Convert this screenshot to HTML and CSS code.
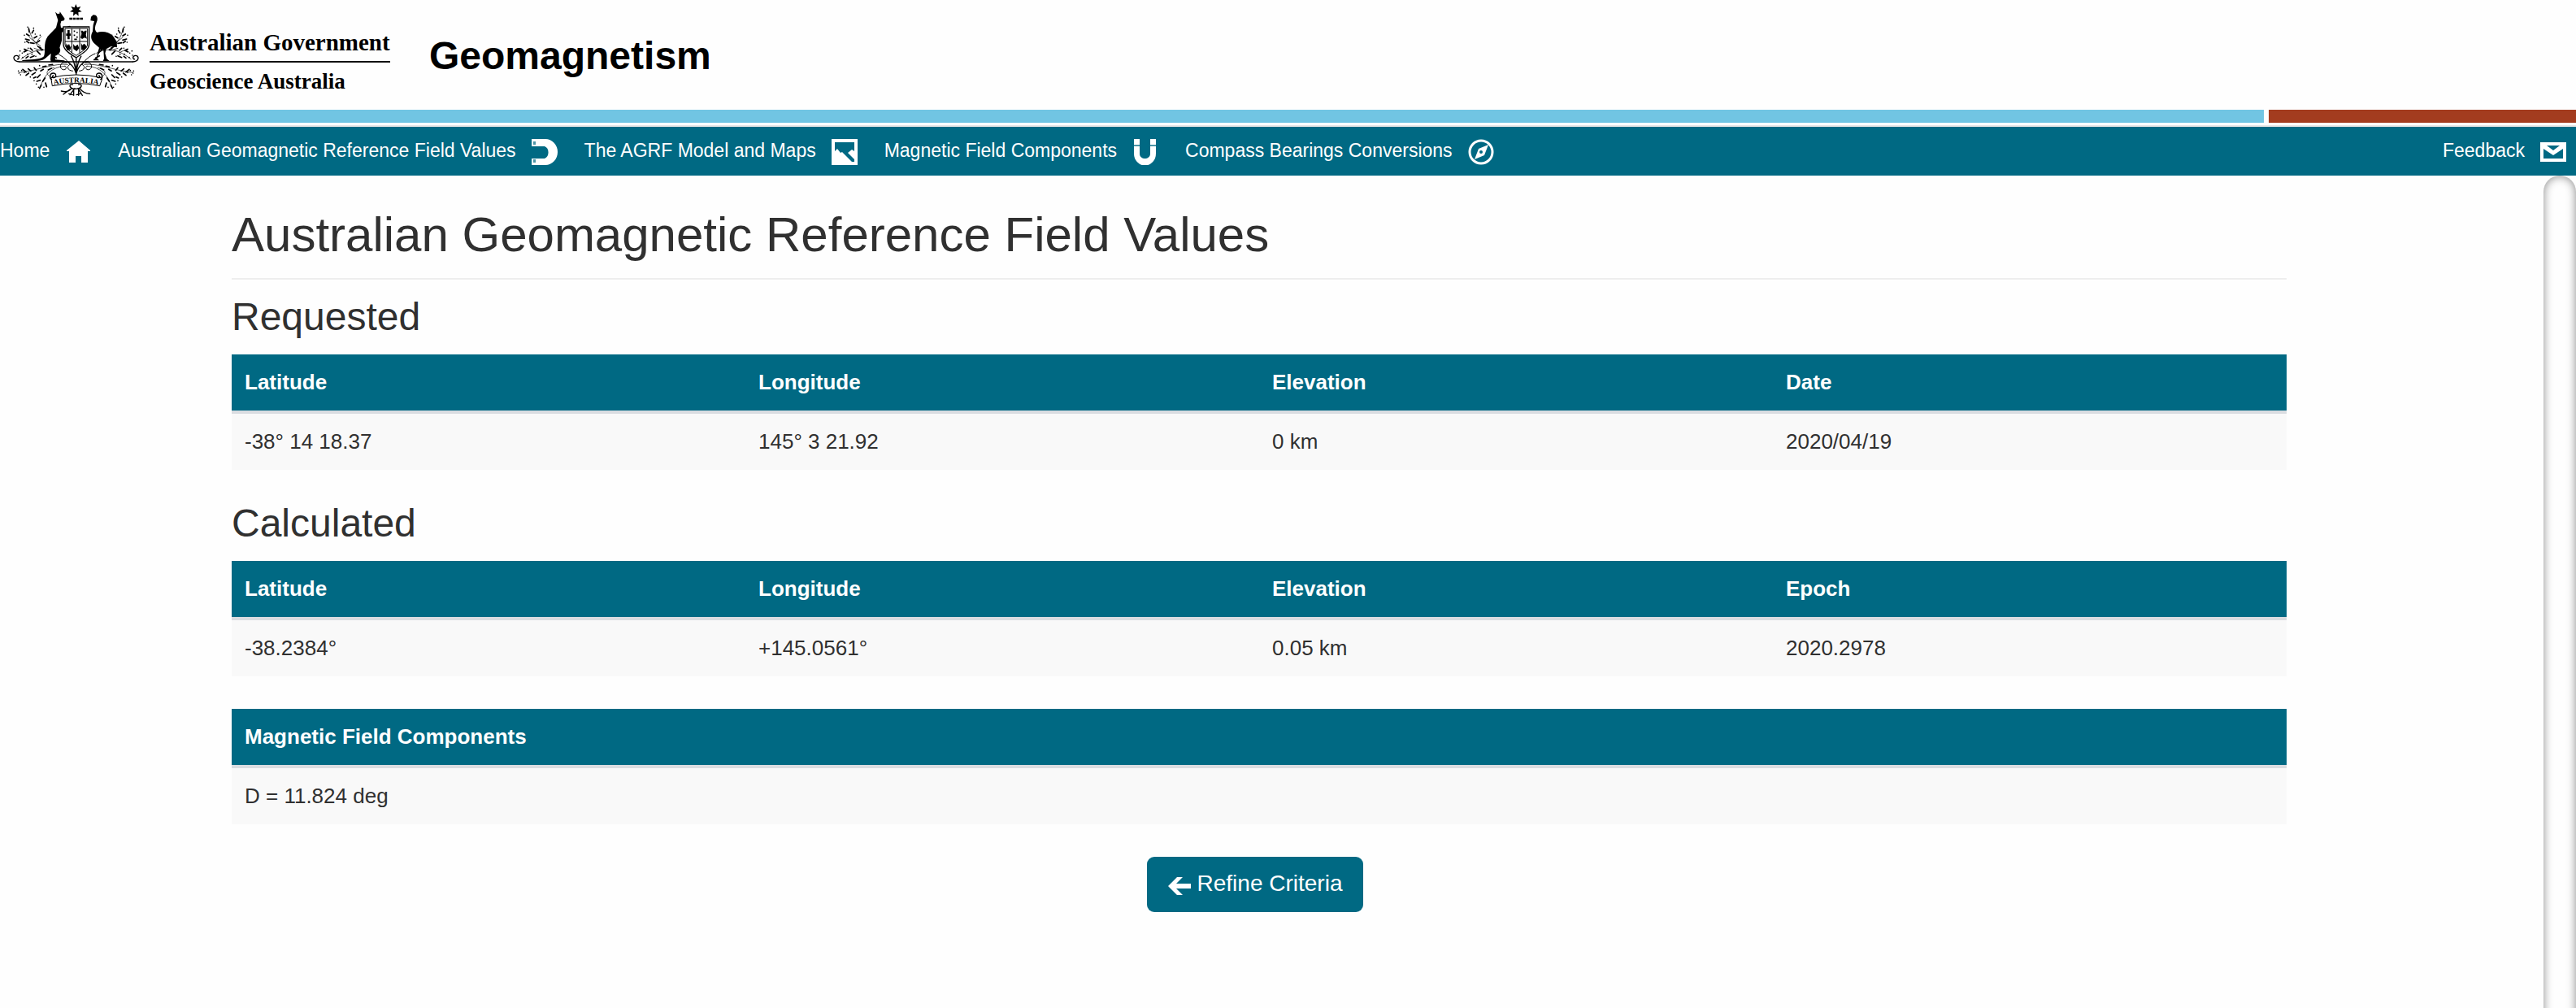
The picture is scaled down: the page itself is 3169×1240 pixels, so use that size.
FILE: index.html
```html
<!DOCTYPE html>
<html lang="en">
<head>
<meta charset="utf-8">
<title>Geomagnetism</title>
<link rel="stylesheet" href="styles.css">
</head>
<body>
<header class="site-header">
  <a class="brand" href="#">
    <svg class="crest" viewBox="0 0 570 375" aria-hidden="true">
      <defs>
        <g id="spray" fill="none" stroke="#000" stroke-width="2" stroke-linecap="round">
          <path d="M155 188C135 165 112 140 106 102M150 170l-42-32M138 150l14-16M205 196C160 172 120 185 78 218M150 186l-24-8M120 194l-30-14"/>
          <path stroke-width="5" d="M106 106l2 12M118 122l6-10M98 126l10 6M94 144l14 4M126 140l10-6M112 158l14 2M134 158l12-8M98 152l8 6M140 172l10 4M88 192l12-6M112 212l14-6M96 214l8-6M136 188l12 12M120 186l-8-8M158 184l-12-8M186 184l10 10M194 206l14 8M90 182l8 4"/>
          <path stroke-width="5" d="M102 100v0M90 130v0M124 104v0M130 126v0M148 130v0M92 156v0M82 196v0M74 188v0M72 204v0M104 178v0M84 212v0M132 208v0M118 200v0M102 200v0"/>
          <path d="M250 238C200 232 150 258 70 268M240 244C190 246 160 280 150 320M200 250c-30 4-36 26-10 34"/>
          <path stroke-width="5" d="M84 256l12 10M104 254l10 8M126 250l8 10M96 278l10-8M118 276l12-8M138 286l10-10M150 262l10-6M158 246l12-2M136 300l12-4M166 288l-8 12M152 314l-6 12M168 306l4 14M180 240l14-2M178 258l12-6M124 288l8-4"/>
          <path stroke-width="5" d="M68 262v0M76 276v0M70 270v0M90 268v0M126 298v0M134 310v0M162 322v0M142 322v0M146 242v0M112 284v0M80 260v0"/>
          <path stroke-width="3" d="M244 232c-16-8-30 14-14 24 12 6 20-8 10-12M262 240c-12-14-30-34-52-42M268 262c-20-2-24-18-10-24"/>
        </g>
      </defs>
      <use href="#spray"/>
      <use href="#spray" transform="translate(561 0) scale(-1 1)"/>
      <path d="M280 15l5 13 13-4-7 11 11 8-13 2 1 14-10-9-10 9 1-14-13-2 11-8-7-11 13 4z"/>
      <path d="M256 69h50" stroke="#000" stroke-width="7" stroke-dasharray="11 2"/>
      <path d="M70 228h422" stroke="#000" stroke-width="5"/>
      <path d="M72 228C46 226 46 204 62 205c12 2 9 15 1 13M490 228c26-2 24-24 9-23-12 2-9 15-1 13" fill="none" stroke="#000" stroke-width="4"/>
      <path d="M204 44l8 7 8-1 1-7 7 10 11 16-3 7-10 2-3 11 2 14 14-2 18-6 6 5-24 12-11 8v30l-8 26c8 14-4 26-17 30l1 14 32 3 10 6h-58l-2-10 2-22-18 16c-12 12-30 14-88 12v-3c46-3 72-4 80-14 8-20-4-46 14-74l31-32 7-28z"/>
      <path d="M336 62l8-7c13-1 17 10 15 20l-7 20c-3 10-1 20 6 25 20-6 44-2 60 14l13 20 1 21-22-4-18 10-4 16 6 20 10 8h-24l4-8-2-32-12-2-6 18-6 14 8 8h-22l2-5 10-5 4-17 6-20-20-18c-12-14-12-28-4-42l2-24 4-14-14-2z"/>
      <path d="M234 99h95v64c0 22-26 34-48 50-24-16-47-28-47-50z" fill="#fff" stroke="#000" stroke-width="4"/>
      <path d="M240 105h83v57c0 18-22 29-42 43-20-14-41-25-41-43zM240 153h83M265 105v91M294 105v91" fill="none" stroke="#000" stroke-width="3"/>
      <path d="M253 111v34M244 128h17" stroke="#000" stroke-width="8"/>
      <path d="M272 115h5M282 120h5M272 130h5M282 137h5M274 145h10" stroke="#000" stroke-width="5"/>
      <path d="M299 113h6l4 5 4-5h7l-3 15 4 15-9-4-9 5-6-5 4-14z"/>
      <path d="M245 160l5 8 5-6 4 11 4-3-3 14-12 2-5-13zM270 162l7 9 10-7 5 14-9 11-12-8zM299 158l5 9 6-6 6 5 4 8-9 11-11-1z"/>
      <path d="M281 214v96M262 206c12 20 16 38 19 66 3-28 7-46 19-66M236 226c24 2 37 20 45 46 8-26 20-44 45-46" fill="none" stroke="#000" stroke-width="4"/>
      <path d="M188 287q93-22 186 0l2 7-8 23q-87-19-175 0z" fill="#fff" stroke="#000" stroke-width="3"/>
      <path d="M192 294c-12-6-8-24 4-24 14 0 12 18 2 17-7-1-4-10 1-8M370 294c12-6 8-24-4-24-14 0-12 18-2 17 7-1 4-10-1-8" fill="none" stroke="#000" stroke-width="4"/>
      <path id="ribbon" d="M199 313q82-17 166 0" fill="none"/>
      <text class="crest-motto"><textPath href="#ribbon">AUSTRALIA</textPath></text>
      <path d="M268 312c-18-2-10 18 10 16 24 0 30-18 12-16M276 326l-18 24M288 326l16 26M272 330v22M290 330v22M264 326c-10 14-24 14-38 10M294 326c10 14 24 20 38 20M258 330l-24 18M254 346l14 4M296 346l-14 4" fill="none" stroke="#000" stroke-width="4" stroke-linecap="round"/>
    </svg>
    <span class="brand-text">
      <span class="brand-government">Australian Government</span>
      <span class="brand-agency">Geoscience Australia</span>
    </span>
  </a>
  <p class="site-title">Geomagnetism</p>
</header>
<div class="stripes"><span class="stripe-blue"></span><span class="stripe-red"></span></div>
<nav class="site-nav">
  <a href="#">Home
    <svg class="icon" viewBox="0 0 32 32"><path d="M17 2L31 14v1h-3v14H20v-8h-7v8H5V15H2v-1z"/></svg></a>
  <a href="#">Australian Geomagnetic Reference Field Values
    <svg class="icon" viewBox="0 0 32 32"><path d="M0 0h17a15 16 0 0 1 0 32H0v-8h16a7 8 0 0 0 0-15H0z"/><path class="icon-tint" d="M2 3h3v4H2zM2 25h3v4H2z"/></svg></a>
  <a href="#">The AGRF Model and Maps
    <svg class="icon" viewBox="0 0 32 32"><path d="M0 0h32v32H0z"/><path class="icon-cut" d="M4 4h24v11l-3-2-5 4 8 8v3h-3L13 16l-2 1-4-5-3 3z"/></svg></a>
  <a href="#">Magnetic Field Components
    <svg class="icon" viewBox="0 0 32 32"><path d="M2 0h7v7H2zM22 0h7v7h-7z"/><path class="icon-tint" d="M2 7h7v2H2zM22 7h7v2h-7z"/><path d="M2 9h7v9c0 8 13 8 13 0V9h7v9a13 14 0 0 1-27 0z"/></svg></a>
  <a href="#">Compass Bearings Conversions
    <svg class="icon" viewBox="0 0 32 32"><circle class="icon-ring" cx="16" cy="16" r="14"/><path fill-rule="evenodd" d="M25 7l-5 13L8 25l5-13zM16 14a2 2 0 1 0 0 4 2 2 0 0 0 0-4z"/></svg></a>
  <a class="nav-feedback" href="#">Feedback
    <svg class="icon" viewBox="0 0 32 32"><path d="M0 4h32v24H0z"/><path class="icon-cut" d="M4 12l12 8 12-8v12H4zM8 8h16l-8 6z"/></svg></a>
</nav>
<div class="page-body">
  <main class="content">
    <h1>Australian Geomagnetic Reference Field Values</h1>
    <h2>Requested</h2>
    <table>
      <thead><tr><th scope="col">Latitude</th><th scope="col">Longitude</th><th scope="col">Elevation</th><th scope="col">Date</th></tr></thead>
      <tbody><tr><td>-38° 14 18.37</td><td>145° 3 21.92</td><td>0 km</td><td>2020/04/19</td></tr></tbody>
    </table>
    <h2>Calculated</h2>
    <table>
      <thead><tr><th scope="col">Latitude</th><th scope="col">Longitude</th><th scope="col">Elevation</th><th scope="col">Epoch</th></tr></thead>
      <tbody><tr><td>-38.2384°</td><td>+145.0561°</td><td>0.05 km</td><td>2020.2978</td></tr></tbody>
    </table>
    <table>
      <thead><tr><th scope="col">Magnetic Field Components</th></tr></thead>
      <tbody><tr><td>D = 11.824 deg</td></tr></tbody>
    </table>
    <div class="actions">
      <button class="refine" type="button"><svg class="arrow" viewBox="0 0 28 24"><path d="M0 12L11 1h7l-8 8h18v6H10l8 8h-7z"/></svg>Refine Criteria</button>
    </div>
  </main>
  <div class="scroll-track"></div>
</div>
</body>
</html>
```
FILE: styles.css
```css
* { box-sizing: border-box; }

body {
  margin: 0;
  min-height: 100vh;
  display: flex;
  flex-direction: column;
  background: #fefefe;
  color: #303030;
  font-family: "Liberation Sans", Arial, sans-serif;
  font-size: 26px;
  line-height: 37px;
}

.site-header {
  display: flex;
  align-items: center;
  height: 135px;
  color: #000;
}

.brand {
  display: flex;
  color: #000;
  text-decoration: none;
  height: 135px;
}

.crest { width: 190px; height: 125px; margin-right: -6px; }
.crest-motto { font: bold 28px "Liberation Serif", serif; }

.brand-text {
  display: flex;
  flex-direction: column;
  padding-top: 34px;
  width: 296px;
  font-family: "Liberation Serif", "Times New Roman", serif;
  font-weight: bold;
  white-space: nowrap;
}
.brand-government { font-size: 29px; line-height: 36px; height: 43px; border-bottom: 2px solid #111; }
.brand-agency { font-size: 27px; line-height: 36px; margin-top: 5px; }

.site-title { margin: 0 0 0 48px; padding-top: 2px; font-size: 48px; line-height: 54px; font-weight: bold; }

.stripes {
  display: flex;
  justify-content: space-between;
  height: 21px;
  padding-bottom: 3px;
  border-bottom: 2px solid #e7e7e7;
}
.stripe-blue { width: calc(88% - 4px); background: #71c5e3; }
.stripe-red { width: calc(12% - 2px); background: #a33c1f; }

.site-nav {
  display: flex;
  align-items: center;
  gap: 33px;
  height: 60px;
  padding-right: 12px;
  background: #006983;
  font-size: 23px;
  line-height: 28px;
  white-space: nowrap;
}
.site-nav a {
  display: flex;
  align-items: center;
  gap: 19px;
  padding-bottom: 2px;
  color: #fff;
  text-decoration: none;
}
.site-nav .nav-feedback { margin-left: auto; }

.icon { width: 32px; height: 32px; margin-top: 4px; fill: #fff; }
.icon-cut { fill: #006983; }
.icon-tint { fill: #4d96a8; }
.icon-ring { fill: none; stroke: #fff; stroke-width: 3px; }

.page-body {
  flex: 1;
  display: flex;
  overflow: hidden;
}

.content {
  flex: 1;
  padding: 40px 316px 0 285px;
}

h1 {
  margin: 0 0 20px;
  padding-bottom: 20px;
  border-bottom: 2px solid #eee;
  font-size: 60px;
  line-height: 66px;
  font-weight: normal;
}

h2 { margin: 0 0 20px; font-size: 48px; line-height: 52px; font-weight: normal; }

table {
  width: 100%;
  margin-bottom: 40px;
  border-spacing: 0;
  table-layout: fixed;
}
th, td { padding: 16px; text-align: left; }
th { background: #006983; color: #fff; border-bottom: 4px solid #dadde1; }
td { background: #f9f9f9; }

.actions { display: flex; justify-content: center; padding-right: 10px; }

.refine {
  display: flex;
  align-items: center;
  gap: 8px;
  height: 68px;
  padding: 0 26px 2px;
  border: 0;
  border-radius: 9px;
  background: #006983;
  color: #fff;
  font: 28px "Liberation Sans", Arial, sans-serif;
}
.arrow { width: 28px; height: 24px; margin-top: 5px; fill: #fff; }

.scroll-track {
  width: 40px;
  margin-bottom: -40px;
  border-radius: 20px;
  box-shadow: inset 0 0 12px #888;
}
```
